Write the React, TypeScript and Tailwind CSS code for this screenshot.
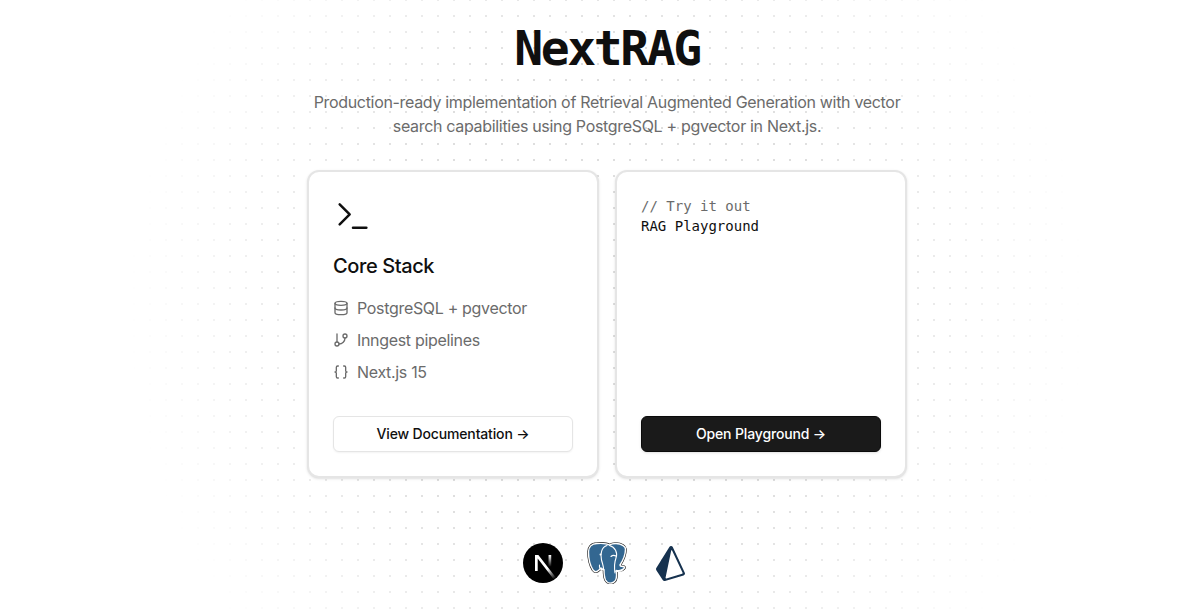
import { Braces, Database, GitBranch, Terminal } from "lucide-react";

const stack = [
  { label: "PostgreSQL + pgvector", icon: Database },
  { label: "Inngest pipelines", icon: GitBranch },
  { label: "Next.js 15", icon: Braces },
];

function NextLogo() {
  return (
    <svg viewBox="0 0 180 180" className="w-10 h-10">
      <defs>
        <linearGradient id="nextA" gradientUnits="userSpaceOnUse" x1="109" y1="116.5" x2="144.5" y2="160.5">
          <stop stopColor="#fff" />
          <stop offset="1" stopColor="#fff" stopOpacity="0" />
        </linearGradient>
        <linearGradient id="nextB" gradientUnits="userSpaceOnUse" x1="121" y1="54" x2="120.8" y2="106.9">
          <stop stopColor="#fff" />
          <stop offset="1" stopColor="#fff" stopOpacity="0" />
        </linearGradient>
      </defs>
      <circle cx="90" cy="90" r="90" fill="#000" />
      <path
        d="M149.508 157.52L69.142 54H54V125.97H66.1136V69.3836L139.999 164.845C143.333 162.614 146.509 160.165 149.508 157.52Z"
        fill="url(#nextA)"
      />
      <rect x="115" y="54" width="12" height="72" fill="url(#nextB)" />
    </svg>
  );
}

const elephant =
  "M10 1.500C4.500 1.500 1.500 5 1.500 10c0 6 2 14 4.500 18 2 2.500 4 2 6 0l2-2c1 1 2 1.500 3 1.500 0 3 0 7 1.500 10.500 1.500 3 5 3.500 7.500 2.500 2.500-1 3.500-3.500 3.500-7v-5c1.500.5 5.500 0 7.500-2 1-1 .5-2-1-2-1.500 0-3-.5-3-1.500 3-4.500 5.500-11 5.500-16C38.500 4.500 34.500 1.500 29 1.500c-3 0-5 .5-6.500 1.500C20 1.500 14 1.200 10 1.500Z";

function PostgresLogo() {
  return (
    <svg viewBox="0 0 40 42" className="w-10 h-[42px]">
      <path d={elephant} fill="#1a1a1a" stroke="#1a1a1a" strokeWidth="2.6" strokeLinejoin="round" />
      <path d={elephant} fill="#336791" stroke="#fff" strokeWidth="1.4" strokeLinejoin="round" />
      <g fill="none" stroke="#fff" strokeWidth="1.1" strokeLinecap="round">
        <path d="M20 3.500C14.500 5 13 12 14.500 18c1 4 2.500 7 2 10-3 0-4.500-2-4-5" />
        <path d="M22.500 3.500c5.500 1.500 8.500 7 6.500 12.500-1.500 4-2 8-1 15" />
        <path d="M28 29c3 1 6 .5 8-1.500" />
        <path d="M29 14c-2-1-3.500-1-5 .5" />
      </g>
      <circle cx="13.500" cy="12.500" r="1" fill="#fff" />
    </svg>
  );
}

function PrismaLogo() {
  return (
    <svg viewBox="0 0 24 24" className="ml-[2px] w-[35px] h-[35px]">
      <path
        fill="#16324f"
        fillRule="evenodd"
        d="M21.8068 18.2848L13.5528.7565c-.207-.4382-.639-.7273-1.1286-.7541-.5023-.0293-.9523.213-1.2062.6253L2.266 15.1271c-.2773.4518-.2718 1.0091.0158 1.4555l4.3759 6.7786c.2608.4046.7127.6388 1.1823.6388.1332 0 .267-.0188.3987-.0577l12.7019-3.7568c.3891-.1151.7072-.3904.8737-.7553s.1633-.7828-.0075-1.1454zm-1.8481.7519L9.1814 22.2242c-.3292.0975-.6448-.1873-.5756-.5194l3.8501-18.4386c.072-.3448.5486-.3996.699-.0803l7.1288 15.138c.1344.2856-.019.6224-.325.7128z"
      />
    </svg>
  );
}

export default function App() {
  return (
    <div className="relative h-[613px] overflow-hidden bg-white pl-[14px] font-['Inter',sans-serif] text-[#0f0f0f]">
      {/* Dotted background */}
      <div className="absolute inset-0 bg-[radial-gradient(#dedede_1px,transparent_1px)] bg-[size:16px_16px] bg-[position:-2px_-8px] [mask-image:radial-gradient(ellipse_480px_500px_at_607px_306px,#000_50%,transparent_100%)]" />

      <main className="relative flex flex-col items-center pt-6">
        <h1 className="font-['DejaVu_Sans_Mono',monospace] text-5xl font-bold tracking-tighter">NextRAG</h1>
        <p className="mt-[18px] w-[600px] text-center text-base leading-6 tracking-[-0.32px] text-[#6b6b6b]">
          Production-ready implementation of Retrieval Augmented Generation with vector search capabilities using
          PostgreSQL + pgvector in Next.js.
        </p>

        <div className="mt-8 grid w-[600px] grid-cols-2 gap-4">
          {/* Core stack */}
          <section className="flex h-[308px] flex-col rounded-xl border-2 border-[#e5e5e5] bg-white p-6 shadow-sm">
            <Terminal size={40} strokeWidth={1.5} />
            <h2 className="mt-4 text-xl font-medium leading-7 tracking-[-0.4px]">Core Stack</h2>
            <ul className="mt-4 flex flex-col gap-2 text-base tracking-[-0.32px] text-[#6b6b6b]">
              {stack.map((item) => (
                <li key={item.label} className="flex items-center gap-2 leading-6">
                  <item.icon size={16} />
                  {item.label}
                </li>
              ))}
            </ul>
            <button className="mt-auto h-9 rounded-md border border-[#e5e5e5] bg-white text-sm font-medium tracking-[-0.15px] shadow-xs">
              View Documentation →
            </button>
          </section>

          {/* Playground */}
          <section className="flex h-[308px] flex-col rounded-xl border-2 border-[#e5e5e5] bg-white p-6 shadow-sm">
            <div className="font-['DejaVu_Sans_Mono',monospace] text-sm leading-5">
              <div className="text-[#6b6b6b]">// Try it out</div>
              <div>RAG Playground</div>
            </div>
            <button className="mt-auto h-9 rounded-md border border-[#0a0a0a] bg-[#1a1a1a] text-sm font-medium tracking-[-0.15px] text-white shadow-sm">
              Open Playground →
            </button>
          </section>
        </div>

        <div className="ml-[-4px] mt-[64px] flex items-center gap-6">
          <NextLogo />
          <PostgresLogo />
          <PrismaLogo />
        </div>
      </main>
    </div>
  );
}
